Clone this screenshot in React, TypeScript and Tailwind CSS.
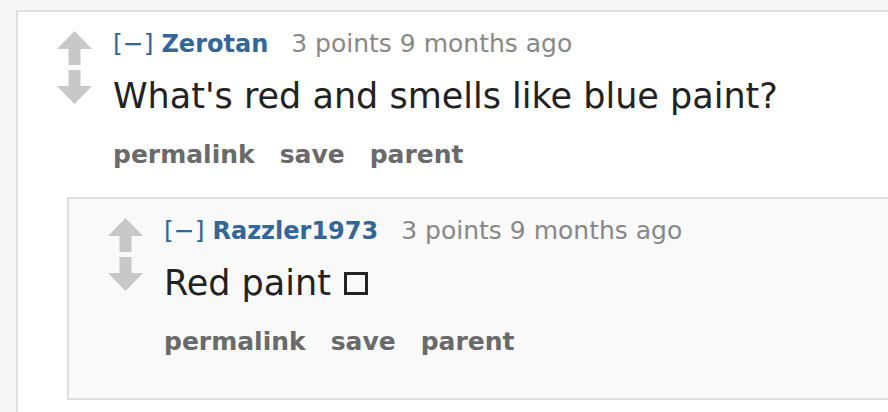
import React from 'react';

const font = { fontFamily: '"DejaVu Sans", Verdana, sans-serif' };

function Arrow({ down = false }: { down?: boolean }) {
  return (
    <svg width="35" height="34" viewBox="0 0 35 34" className={down ? 'rotate-180' : ''}>
      <path d="M17.5 0 L35 18 L23.5 18 L23.5 34 L11.5 34 L11.5 18 L0 18 Z" fill="#c8c8c8" />
    </svg>
  );
}

function Comment({
  author,
  body,
  children,
  box = false,
}: {
  author: string;
  body: React.ReactNode;
  children?: React.ReactNode;
  box?: boolean;
}) {
  return (
    <div>
      <div className="flex">
        <div className="flex w-[35px] shrink-0 flex-col gap-[5px] pt-[19px]">
          <Arrow />
          <Arrow down />
        </div>
        <div className="ml-[21px] min-w-0">
          <div className="mt-[17px] flex items-baseline whitespace-nowrap text-[25px] leading-[30px]">
            <span className="text-[#336699]">[−]</span>
            <span className="ml-[8px] text-[24px] font-bold text-[#336699]">{author}</span>
            <span className="ml-[23px] text-[#888888]">3 points 9 months ago</span>
          </div>
          <div className="mt-[16px] flex items-center whitespace-nowrap text-[35px] leading-[42px] text-[#222222]">
            {body}
            {box && <span className="ml-[13px] inline-block h-[23px] w-[24px] border-[3px] border-[#222222]" />}
          </div>
          <div className="mt-[23px] flex gap-[25px] whitespace-nowrap text-[25px] font-bold leading-[30px] text-[#6a6a6a]">
            <span>permalink</span>
            <span>save</span>
            <span>parent</span>
          </div>
        </div>
      </div>
      {children}
    </div>
  );
}

export default function App() {
  return (
    <div className="h-[412px] w-[888px] overflow-hidden bg-[#f7f7f7] pl-[16px] pt-[10px]" style={font}>
      <div className="h-[500px] w-[1000px] border-2 border-[#e0e0e0] bg-white pl-[39px]">
        <Comment author="Zerotan" body="What's red and smells like blue paint?">
          <div className="ml-[10px] mt-[27px] h-[203px] border-2 border-[#dedede] bg-[#f9f9f9] pl-[39px]">
            <Comment author="Razzler1973" body="Red paint" box />
          </div>
        </Comment>
      </div>
    </div>
  );
}
